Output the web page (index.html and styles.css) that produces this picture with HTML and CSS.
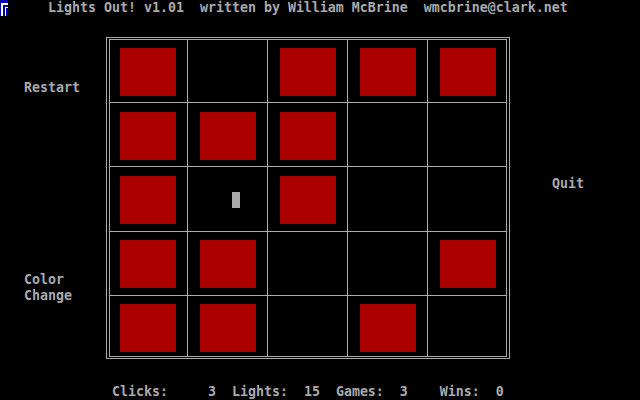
FILE: index.html
```html
<!DOCTYPE html>
<html>
<head>
<meta charset="utf-8">
<link rel="stylesheet" href="styles.css">
</head>
<body>
<div class="screen">
  <div class="title">
    <span class="sysicon"><svg width="8" height="16" viewBox="0 0 8 16"><rect x="0" y="0" width="8" height="16" fill="#0000aa"/><path d="M1 3H8V5H3V16H1Z M5 7H8V8H6V16H5Z" fill="#ffffff"/></svg></span>
    <span class="title-text">Lights Out! v1.01  written by William McBrine  wmcbrine@clark.net</span>
  </div>
  <div class="main">
    <div class="left">
      <div class="btn restart">Restart</div>
      <div class="btn color">Color<br>Change</div>
    </div>
    <div class="board">
      <div class="grid">
        <div class="cell"><div class="light"></div></div>
        <div class="cell"></div>
        <div class="cell"><div class="light"></div></div>
        <div class="cell"><div class="light"></div></div>
        <div class="cell"><div class="light"></div></div>

        <div class="cell"><div class="light"></div></div>
        <div class="cell"><div class="light"></div></div>
        <div class="cell"><div class="light"></div></div>
        <div class="cell"></div>
        <div class="cell"></div>

        <div class="cell"><div class="light"></div></div>
        <div class="cell"></div>
        <div class="cell"><div class="light"></div></div>
        <div class="cell"></div>
        <div class="cell"></div>

        <div class="cell"><div class="light"></div></div>
        <div class="cell"><div class="light"></div></div>
        <div class="cell"></div>
        <div class="cell"></div>
        <div class="cell"><div class="light"></div></div>

        <div class="cell"><div class="light"></div></div>
        <div class="cell"><div class="light"></div></div>
        <div class="cell"></div>
        <div class="cell"><div class="light"></div></div>
        <div class="cell"></div>
      </div>
      <div class="cursor"></div>
    </div>
    <div class="right">
      <div class="btn">Quit</div>
    </div>
  </div>
  <div class="status">Clicks:     3  Lights:  15  Games:  3    Wins:  0</div>
</div>
</body>
</html>
```
FILE: styles.css
```css
html, body {
  margin: 0;
  padding: 0;
  background: #000000;
}
.screen {
  width: 640px;
  height: 400px;
  background: #000000;
  color: #aaaaaa;
  font-family: "DejaVu Sans Mono", "Liberation Mono", monospace;
  font-size: 13.29px;
  font-weight: bold;
  line-height: 16px;
  overflow: hidden;
}
.title {
  display: flex;
  height: 16px;
}
.sysicon {
  display: block;
  width: 8px;
  height: 16px;
}
.sysicon svg {
  display: block;
}
.title-text {
  margin-left: 40px;
  white-space: pre;
}
.main {
  display: flex;
  height: 368px;
}
.left {
  width: 82px;
  padding-left: 24px;
  padding-top: 64px;
}
.btn {
  white-space: pre;
}
.color {
  margin-top: 176px;
}
.board {
  position: relative;
  margin-top: 21px;
  align-self: flex-start;
  border: 1px solid #aaaaaa;
  padding: 1px 2px;
}
.grid {
  display: grid;
  grid-template-columns: 77px 79px 79px 79px 78px;
  grid-template-rows: 62px 63px 64px 63px 60px;
  gap: 1px;
  background: #aaaaaa;
  border: 1px solid #aaaaaa;
}
.cell {
  background: #000000;
  padding-top: 8px;
  padding-left: 12px;
}
.cell:nth-child(5n+1) {
  padding-left: 10px;
}
.cell:nth-child(n+6):nth-child(-n+15) {
  padding-top: 9px;
}
.light {
  width: 56px;
  height: 48px;
  background: #aa0000;
}
.cursor {
  position: absolute;
  left: 125px;
  top: 154px;
  width: 8px;
  height: 16px;
  background: #aaaaaa;
}
.right {
  flex: 1;
  padding-left: 42px;
  padding-top: 160px;
}
.status {
  height: 16px;
  padding-left: 112px;
  white-space: pre;
}
```
